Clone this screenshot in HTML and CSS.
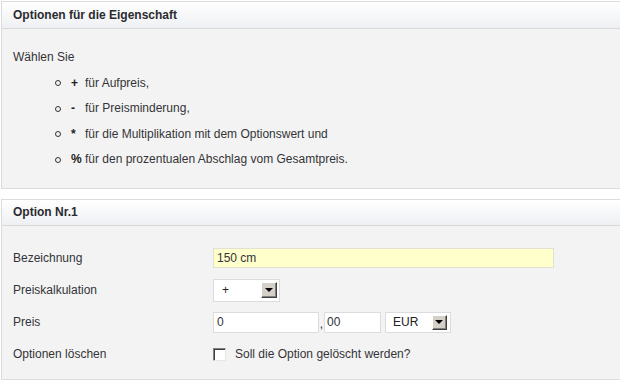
FILE: index.html
```html
<!DOCTYPE html>
<html lang="de">
<head>
<meta charset="utf-8">
<title>Optionen</title>
<link rel="stylesheet" href="styles.css">
</head>
<body>
<div class="panel panel-info">
  <div class="panel-head">Optionen für die Eigenschaft</div>
  <div class="panel-body info-body">
    <p class="intro">Wählen Sie</p>
    <ul class="signs">
      <li><span class="dot"></span><b class="sign">+</b>für Aufpreis,</li>
      <li><span class="dot"></span><b class="sign">-</b>für Preisminderung,</li>
      <li><span class="dot"></span><b class="sign">*</b>für die Multiplikation mit dem Optionswert und</li>
      <li><span class="dot"></span><b class="sign">%</b>für den prozentualen Abschlag vom Gesamtpreis.</li>
    </ul>
  </div>
</div>

<div class="panel panel-option">
  <div class="panel-head">Option Nr.1</div>
  <div class="panel-body form-body">
    <div class="row">
      <div class="lbl">Bezeichnung</div>
      <div class="field"><input class="txt txt-name" type="text" value="150 cm"></div>
    </div>
    <div class="row">
      <div class="lbl">Preiskalkulation</div>
      <div class="field">
        <div class="combo combo-calc"><span class="combo-val">+</span><span class="combo-btn"><span class="tri"></span></span></div>
      </div>
    </div>
    <div class="row">
      <div class="lbl">Preis</div>
      <div class="field">
        <input class="txt txt-euro" type="text" value="0"><span class="comma">,</span><input class="txt txt-cent" type="text" value="00">
        <div class="combo combo-cur"><span class="combo-val">EUR</span><span class="combo-btn"><span class="tri"></span></span></div>
      </div>
    </div>
    <div class="row">
      <div class="lbl">Optionen löschen</div>
      <div class="field"><span class="check"></span><span class="check-label">Soll die Option gelöscht werden?</span></div>
    </div>
  </div>
</div>
</body>
</html>
```

FILE: styles.css
```css
html, body {
  margin: 0;
  padding: 0;
  background: #ffffff;
}
body {
  font-family: "Liberation Sans", Arial, sans-serif;
  font-size: 12px;
  color: #333338;
  padding-top: 1px;
}
.panel {
  margin-left: 1px;
  border-top: 1px solid #dcdcdc;
  border-left: 1px solid #dcdcdc;
  border-bottom: 1px solid #dcdcdc;
}
.panel-option {
  margin-top: 10px;
}
.panel-head {
  font-weight: bold;
  padding-left: 11px;
  background: linear-gradient(#ffffff, #eef0f3);
  border-bottom: 1px solid #d8d8d8;
  color: #2b2b30;
}
.panel-info .panel-head {
  height: 26px;
  line-height: 26px;
}
.panel-option .panel-head {
  height: 25px;
  line-height: 25px;
}
.panel-body {
  background: #f3f3f3;
}
.info-body {
  height: 159px;
  box-sizing: border-box;
  padding: 16px 0 0 11px;
}
.intro {
  margin: 0;
  line-height: 25.5px;
}
.signs {
  list-style: none;
  margin: 0;
  padding: 0 0 0 42px;
}
.signs li {
  line-height: 25.5px;
  display: flex;
  align-items: center;
}
.dot {
  display: inline-block;
  width: 4px;
  height: 4px;
  border: 1px solid #333;
  border-radius: 50%;
  margin-right: 10px;
}
.sign {
  display: inline-block;
  width: 14px;
  font-weight: bold;
  color: #222;
}
.form-body {
  height: 153px;
  box-sizing: border-box;
  padding: 16px 0 0 11px;
}
.row {
  display: flex;
  align-items: center;
  height: 32px;
}
.lbl {
  width: 200px;
  flex: none;
}
.field {
  display: flex;
  align-items: center;
}
.txt {
  box-sizing: border-box;
  font-family: "Liberation Sans", Arial, sans-serif;
  font-size: 12px;
  color: #333338;
  border: 1px solid #dcdcdc;
  background: #ffffff;
  margin: 0;
  padding: 0 3px;
  height: 20px;
  outline: none;
}
.txt-name {
  width: 341px;
  background: #ffffcc;
  border-color: #e2e2d4;
}
.txt-euro {
  width: 106px;
  height: 21px;
}
.comma {
  width: 5px;
  text-align: center;
  padding-top: 3px;
}
.txt-cent {
  width: 57px;
  height: 21px;
  padding-left: 2px;
}
.combo {
  box-sizing: border-box;
  display: flex;
  align-items: center;
  justify-content: space-between;
  background: #ffffff;
  border: 1px solid #dcdcdc;
}
.combo-calc {
  width: 67px;
  height: 23px;
  padding: 0 2px 0 8px;
}
.combo-cur {
  width: 66px;
  height: 21px;
  margin-left: 4px;
  padding: 0 3px 0 7px;
}
.combo-val {
  color: #222;
}
.combo-btn {
  box-sizing: border-box;
  width: 16px;
  height: 16px;
  background: #d4d0c8;
  border-top: 1px solid #ffffff;
  border-left: 1px solid #ffffff;
  border-right: 1px solid #404040;
  border-bottom: 1px solid #404040;
  box-shadow: inset -1px -1px 0 #808080;
  display: flex;
  align-items: center;
  justify-content: center;
}
.combo-cur .combo-btn {
  width: 15px;
  height: 15px;
}
.tri {
  width: 0;
  height: 0;
  border-left: 4px solid transparent;
  border-right: 4px solid transparent;
  border-top: 4px solid #000;
  margin: 0 1px 1px 0;
}
.check {
  box-sizing: border-box;
  display: inline-block;
  width: 13px;
  height: 13px;
  background: #ffffff;
  border-top: 1px solid #808080;
  border-left: 1px solid #808080;
  border-right: 1px solid #e6e6e6;
  border-bottom: 1px solid #e6e6e6;
  box-shadow: inset 1px 1px 0 #404040;
  margin-right: 9px;
}
.check-label {
  color: #333338;
}
```
